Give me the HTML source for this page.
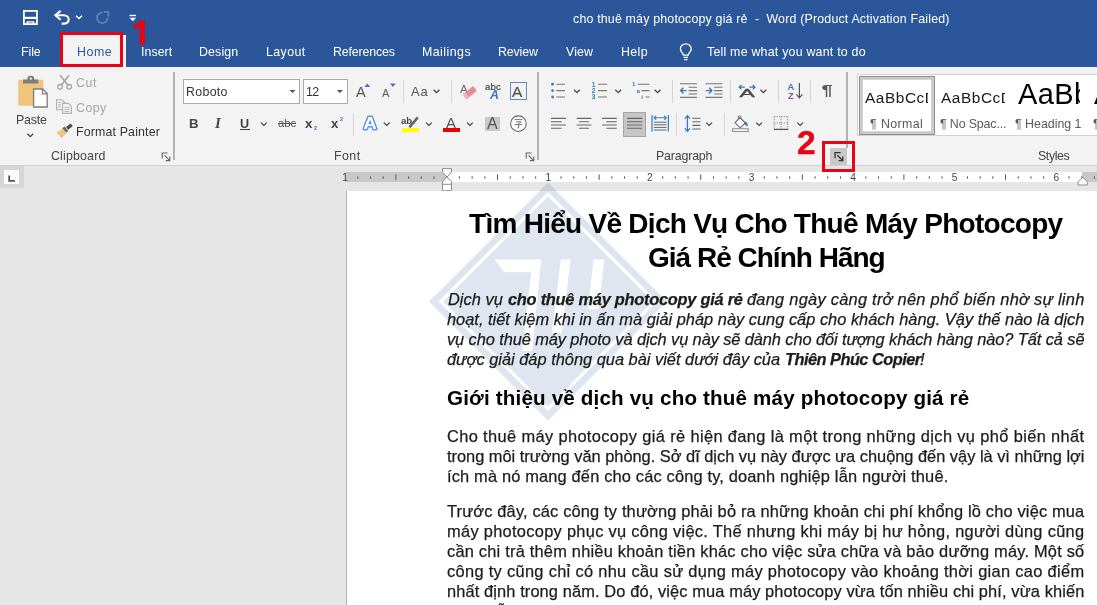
<!DOCTYPE html>
<html lang="vi">
<head>
<meta charset="utf-8">
<title>Word</title>
<style>
html,body{margin:0;padding:0;}
body{width:1097px;height:605px;overflow:hidden;position:relative;background:#e6e6e6;font-family:"Liberation Sans",sans-serif;color:#444;}
.t{position:absolute;white-space:pre;line-height:1;margin:0;padding:0;will-change:transform;}
.a{position:absolute;}
.sep{position:absolute;width:1px;background:#d4d4d4;}
.gsep{position:absolute;width:1px;background:#b4b4b4;}
svg{position:absolute;overflow:visible;}
</style>
</head>
<body>
<!-- ===== title bar + tabs ===== -->
<div class="a" style="left:0;top:0;width:1097px;height:67px;background:#2b579a;"></div>
<div class="a" style="left:63px;top:35px;width:63px;height:32px;background:#f3f3f3;"></div>
<!-- save -->
<svg style="left:22px;top:9px" width="18" height="18" viewBox="22 9 18 18">
<rect x="23.9" y="10.9" width="13" height="13.2" fill="none" stroke="#fff" stroke-width="1.8"/>
<rect x="24" y="16.8" width="13" height="2.2" fill="#fff"/>
<path d="M26.6 21.2 H34.4 V24.6 H32.6 V22.6 H28.4 V24.6 H26.6 Z" fill="#fff"/>
</svg>
<!-- undo -->
<svg style="left:52px;top:8px" width="20" height="20" viewBox="52 8 20 20">
<path d="M60.6 10.9 L55.4 15.3 L60.6 19.7" fill="none" stroke="#fff" stroke-width="2.1"/>
<path d="M56 15.3 H63.4 C70.4 15.3 70.6 23.4 63.2 23.6 H61.6" fill="none" stroke="#fff" stroke-width="2.1"/>
</svg>
<svg style="left:74px;top:13px" width="10" height="8" viewBox="74 13 10 8"><path d="M76 15.8 L79 18.6 L82 15.8" fill="none" stroke="#fff" stroke-width="1.4"/></svg>
<!-- redo (dim) -->
<svg style="left:94px;top:9px" width="18" height="18" viewBox="94 9 18 18">
<path d="M107.6 17.8 A5.3 5.3 0 1 1 102.3 12.5" fill="none" stroke="#5c82bd" stroke-width="1.8"/>
<path d="M103.6 11.8 H108.4 V16.6" fill="none" stroke="#5c82bd" stroke-width="1.8"/>
</svg>
<!-- customize -->
<svg style="left:128px;top:12px" width="10" height="12" viewBox="128 12 10 12">
<rect x="129.6" y="14.8" width="6.4" height="1.4" fill="#fff"/>
<path d="M129.4 17.8 H136.2 L132.8 21.2 Z" fill="#fff"/>
</svg>
<!-- lightbulb -->
<svg style="left:677px;top:42px" width="18" height="20" viewBox="677 42 18 20">
<path d="M683.4 55.2 C683.4 52.8 680.4 52.2 680.4 49 A5.4 5.2 0 0 1 691.2 49 C691.2 52.2 688.2 52.8 688.2 55.2 Z" fill="none" stroke="#fff" stroke-width="1.3"/>
<path d="M683.6 57.4 H688 M684.2 59.6 H687.4" stroke="#fff" stroke-width="1.2"/>
</svg>

<span class="t" style="left:572.9px;top:13.2px;font-size:12.4px;letter-spacing:0.180px;color:#fff;">cho thuê máy photocopy giá rẻ  -  Word (Product Activation Failed)</span>
<span class="t" style="left:21.1px;top:45.8px;font-size:12.4px;letter-spacing:-0.067px;color:#fff;">File</span>
<span class="t" style="left:77.2px;top:45.8px;font-size:12.4px;letter-spacing:0.534px;color:#2b579a;">Home</span>
<span class="t" style="left:140.5px;top:45.8px;font-size:12.4px;letter-spacing:0.050px;color:#fff;">Insert</span>
<span class="t" style="left:199.3px;top:45.8px;font-size:12.4px;letter-spacing:0.120px;color:#fff;">Design</span>
<span class="t" style="left:265.8px;top:45.8px;font-size:12.4px;letter-spacing:0.416px;color:#fff;">Layout</span>
<span class="t" style="left:332.6px;top:45.8px;font-size:12.4px;letter-spacing:-0.147px;color:#fff;">References</span>
<span class="t" style="left:421.7px;top:45.8px;font-size:12.4px;letter-spacing:0.456px;color:#fff;">Mailings</span>
<span class="t" style="left:497.9px;top:45.8px;font-size:12.4px;letter-spacing:-0.157px;color:#fff;">Review</span>
<span class="t" style="left:565.6px;top:45.8px;font-size:12.4px;letter-spacing:0.115px;color:#fff;">View</span>
<span class="t" style="left:620.8px;top:45.8px;font-size:12.4px;letter-spacing:0.379px;color:#fff;">Help</span>
<span class="t" style="left:707.2px;top:45.8px;font-size:12.4px;letter-spacing:0.218px;color:#fff;">Tell me what you want to do</span>

<!-- ===== ribbon ===== -->
<div class="a" style="left:0;top:67px;width:1097px;height:98px;background:#f3f3f3;border-bottom:1px solid #d2d2d2;"></div>
<!-- ===== Clipboard group ===== -->
<svg style="left:16px;top:74px" width="34" height="36" viewBox="16 74 34 36">
<rect x="18.2" y="79.8" width="25.2" height="26" rx="1.6" fill="#edc57c"/>
<path d="M23 83.400 V79.400 H27.400 V78.400 A3.400 2.600 0 0 1 34.200 78.400 V79.400 H38.300 V83.400 Z" fill="#7d7d7d"/>
<circle cx="30.800" cy="78.700" r="1.100" fill="#f3f3f3"/>
<path d="M33.600 89 H42.600 L47.200 93.600 V107 H33.600 Z" fill="#fff" stroke="#7d7d7d" stroke-width="1.3"/>
<path d="M42.400 89.200 V93.800 H47" fill="none" stroke="#7d7d7d" stroke-width="1.200"/>
</svg>
<span class="t" style="left:15.6px;top:113.7px;font-size:12.4px;letter-spacing:-0.177px;color:#444;">Paste</span>
<svg style="left:26px;top:132px" width="9" height="7" viewBox="26 132 9 7"><path d="M27.400 133.800 L30.300 136.600 L33.200 133.800" fill="none" stroke="#444" stroke-width="1.300"/></svg>
<!-- scissors -->
<svg style="left:56px;top:74px" width="18" height="17" viewBox="56 74 18 17">
<path d="M60.200 75.200 L68 85.200 M69 75.200 L61.200 85.200" fill="none" stroke="#a8a8a8" stroke-width="1.700"/>
<circle cx="60" cy="86.800" r="2.300" fill="none" stroke="#a6a6a6" stroke-width="1.300"/>
<circle cx="69.200" cy="86.800" r="2.300" fill="none" stroke="#a6a6a6" stroke-width="1.300"/>
</svg>
<span class="t" style="left:75.8px;top:77.2px;font-size:12.4px;letter-spacing:0.568px;color:#a6a6a6;">Cut</span>
<!-- copy -->
<svg style="left:55px;top:98px" width="18" height="17" viewBox="55 98 18 17">
<path d="M56.600 99.800 H62 L64.400 102.200 V109.800 H56.600 Z" fill="#f3f3f3" stroke="#b0b0b0" stroke-width="1.100"/>
<path d="M58 102.600 H61.400 M58 104.800 H61 M58 107 H61" stroke="#b0b0b0" stroke-width="0.900"/>
<path d="M62.600 103.400 H68.400 L71.400 106.400 V113.400 H62.600 Z" fill="#f3f3f3" stroke="#b0b0b0" stroke-width="1.100"/>
<path d="M64.400 107.400 H69.600 M64.400 109.400 H69.600 M64.400 111.400 H69.600" stroke="#b0b0b0" stroke-width="0.900"/>
</svg>
<span class="t" style="left:75.8px;top:101.9px;font-size:12.4px;letter-spacing:0.441px;color:#a6a6a6;">Copy</span>
<!-- format painter -->
<svg style="left:55px;top:122px" width="20" height="18" viewBox="55 122 20 18">
<path d="M56.600 132.600 L62.400 129 L66.400 133.600 L61.200 138 Z" fill="#edc57c"/>
<path d="M62.200 128.200 L64.600 126.400 L68.400 131 L66.200 132.800 Z" fill="#6a6a6a"/>
<path d="M66 127 L70.600 123.400 L72.800 126 L68.200 129.800 Z" fill="#4a4a4a"/>
</svg>
<span class="t" style="left:75.8px;top:125.7px;font-size:12.4px;letter-spacing:0.146px;color:#333;">Format Painter</span>
<span class="t" style="left:50.8px;top:150.2px;font-size:12.4px;letter-spacing:0.161px;color:#444;">Clipboard</span>
<svg style="left:161px;top:152px" width="10" height="10" viewBox="161 152 10 10">
<path d="M162.200 158.400 V153 H167.600" fill="none" stroke="#666" stroke-width="1.100"/>
<path d="M164.600 155.400 L169.600 160.400 M169.800 156.600 V160.600 H165.800" fill="none" stroke="#666" stroke-width="1.100"/>
</svg>
<div class="gsep" style="left:173px;top:72px;height:88px;width:1.500px;background:#b2b2b2;"></div>

<!-- ===== Font group ===== -->
<div class="a" style="left:183px;top:79px;width:115px;height:23px;background:#fff;border:1px solid #ababab;"></div>
<div class="a" style="left:303px;top:79px;width:43px;height:23px;background:#fff;border:1px solid #ababab;"></div>
<span class="t" style="left:186.0px;top:86.0px;font-size:12.4px;letter-spacing:0.305px;color:#333;">Roboto</span>
<span class="t" style="left:305.9px;top:86.0px;font-size:12.4px;letter-spacing:-0.598px;color:#333;">12</span>
<svg style="left:288px;top:88px" width="9" height="6" viewBox="288 88 9 6"><path d="M289.400 90 H295.600 L292.500 93 Z" fill="#555"/></svg>
<svg style="left:335px;top:88px" width="9" height="6" viewBox="335 88 9 6"><path d="M336.800 90 H343 L339.900 93 Z" fill="#555"/></svg>
<span class="t" style="left:188.9px;top:117.3px;font-size:13.2px;letter-spacing:0.269px;color:#444;font-weight:bold;">B</span>
<span class="t" style="left:215.0px;top:115.6px;font-size:14.8px;letter-spacing:3.234px;color:#444;font-weight:bold;font-style:italic;font-family:'Liberation Serif',serif;">I</span>
<span class="t" style="left:239.6px;top:117.6px;font-size:12.6px;letter-spacing:1.791px;color:#444;font-weight:bold;">U</span>
<div class="a" style="left:240px;top:128.800px;width:10px;height:1.200px;background:#444;"></div>
<svg style="left:259px;top:120px" width="10" height="8" viewBox="259 120 10 8"><path d="M261 122.600 L263.900 125.400 L266.800 122.600" fill="none" stroke="#444" stroke-width="1.300"/></svg>
<span class="t" style="left:277.8px;top:118.4px;font-size:11.4px;letter-spacing:-0.058px;color:#555;">abc</span>
<div class="a" style="left:278px;top:123.400px;width:18px;height:1.100px;background:#555;"></div>
<span class="t" style="left:305.0px;top:117.3px;font-size:13.2px;letter-spacing:1.056px;color:#444;font-weight:bold;">x</span>
<span class="t" style="left:314.1px;top:125.6px;font-size:5.6px;letter-spacing:1.975px;color:#3a78c2;font-weight:bold;">2</span>
<span class="t" style="left:330.5px;top:117.3px;font-size:13.2px;letter-spacing:1.056px;color:#444;font-weight:bold;">x</span>
<span class="t" style="left:339.6px;top:117.2px;font-size:5.6px;letter-spacing:1.675px;color:#3a78c2;font-weight:bold;">2</span>
<div class="sep" style="left:353px;top:113px;height:23px;"></div>
<span class="t" style="left:356.0px;top:85.0px;font-size:14.6px;letter-spacing:2.366px;color:#555;">A</span>
<svg style="left:363px;top:82px" width="8" height="6" viewBox="363 82 8 6"><path d="M364.400 87 L367.300 83.400 L370.200 87 Z" fill="#3a78c2"/></svg>
<span class="t" style="left:382.4px;top:88.1px;font-size:11.0px;letter-spacing:2.056px;color:#555;">A</span>
<svg style="left:389px;top:82px" width="8" height="6" viewBox="389 82 8 6"><path d="M390 83.400 H395.800 L392.900 87 Z" fill="#3a78c2"/></svg>
<div class="sep" style="left:403px;top:80px;height:23px;"></div>
<span class="t" style="left:410.8px;top:84.9px;font-size:13.0px;letter-spacing:0.797px;color:#555;">Aa</span>
<svg style="left:432px;top:87px" width="10" height="8" viewBox="432 87 10 8"><path d="M433.600 89.800 L436.500 92.600 L439.400 89.800" fill="none" stroke="#444" stroke-width="1.300"/></svg>
<div class="sep" style="left:451px;top:80px;height:23px;"></div>
<!-- clear formatting -->
<span class="t" style="left:460.4px;top:83.8px;font-size:11.5px;letter-spacing:1.128px;color:#666;">A</span>
<svg style="left:462px;top:84px" width="16" height="16" viewBox="462 84 16 16">
<g transform="rotate(-40 469.800 92.600)"><rect x="463" y="89.500" width="13.600" height="6.200" rx="1.200" fill="#e88b9c"/><rect x="463" y="89.500" width="3.400" height="6.200" rx="1" fill="#f2b3bf"/></g>
</svg>
<!-- text effects abc/A -->
<span class="t" style="left:484.6px;top:82.1px;font-size:9.6px;letter-spacing:0.177px;color:#444;-webkit-text-stroke:0.200px #444;">abc</span>
<span class="t" style="left:489.8px;top:89.4px;font-size:12.4px;letter-spacing:2.647px;color:#3a78c2;font-weight:bold;font-style:italic;">A</span>
<!-- char border -->
<div class="a" style="left:510px;top:82px;width:17px;height:17.600px;border:1px solid #5f8bc9;box-sizing:border-box;"></div>
<span class="t" style="left:512.4px;top:83.7px;font-size:15.4px;letter-spacing:2.334px;color:#505050;-webkit-text-stroke:0.200px #505050;">A</span>
<!-- row2: text effects -->
<svg style="left:360px;top:114px" width="20" height="18" viewBox="360 114 20 18">
<text x="363.400" y="129.200" font-family="Liberation Sans, sans-serif" font-size="17" font-weight="bold" fill="#fff" stroke="#5f97de" stroke-width="2.800" paint-order="stroke" stroke-linejoin="round" textLength="13.200" lengthAdjust="spacingAndGlyphs">A</text>
</svg>
<svg style="left:382px;top:120px" width="10" height="8" viewBox="382 120 10 8"><path d="M383.800 122.600 L386.700 125.400 L389.600 122.600" fill="none" stroke="#444" stroke-width="1.300"/></svg>
<!-- highlight -->
<span class="t" style="left:401.2px;top:116.0px;font-size:9.6px;letter-spacing:-0.102px;color:#444;font-weight:bold;">ab</span>
<svg style="left:400px;top:114px" width="22" height="20" viewBox="400 114 22 20">
<path d="M408.400 126.600 L416.800 116.600 L418.800 118.200 L410.600 128 Z" fill="#666"/>
<rect x="402" y="128" width="17" height="4.200" fill="#ffff00"/>
</svg>
<svg style="left:424px;top:120px" width="10" height="8" viewBox="424 120 10 8"><path d="M426 122.600 L428.900 125.400 L431.800 122.600" fill="none" stroke="#444" stroke-width="1.300"/></svg>
<!-- font color -->
<span class="t" style="left:445.8px;top:115.6px;font-size:14.8px;letter-spacing:2.725px;color:#555;">A</span>
<div class="a" style="left:443px;top:128px;width:17px;height:4.200px;background:#ee0000;"></div>
<svg style="left:465px;top:120px" width="10" height="8" viewBox="465 120 10 8"><path d="M467 122.600 L469.900 125.400 L472.800 122.600" fill="none" stroke="#444" stroke-width="1.300"/></svg>
<!-- char shading -->
<div class="a" style="left:485.300px;top:116.600px;width:15px;height:14.400px;background:#c8c8c8;"></div>
<span class="t" style="left:486.6px;top:115.7px;font-size:16.0px;letter-spacing:2.528px;color:#555;">A</span>
<!-- enclosed -->
<svg style="left:508px;top:114px" width="20" height="20" viewBox="508 114 20 20">
<circle cx="518.400" cy="123.700" r="7.800" fill="#fff" stroke="#666" stroke-width="1.100"/>
<path d="M515 120.200 V119.400 H522 V120.200 M516 121.800 H521 L518.600 123.600 M514.600 124.600 H522.400 M518.600 123.600 V128 H517.400" fill="none" stroke="#666" stroke-width="0.900"/>
</svg>
<svg style="left:525px;top:152px" width="10" height="10" viewBox="525 152 10 10">
<path d="M526.200 158.400 V153 H531.600" fill="none" stroke="#666" stroke-width="1.100"/>
<path d="M528.600 155.400 L533.600 160.400 M533.800 156.600 V160.600 H529.800" fill="none" stroke="#666" stroke-width="1.100"/>
</svg>
<div class="gsep" style="left:537px;top:72px;height:88px;width:1.500px;background:#b2b2b2;"></div>
<span class="t" style="left:333.8px;top:150.2px;font-size:12.4px;letter-spacing:0.451px;color:#444;">Font</span>

<!-- ===== Paragraph group ===== -->
<!-- bullets -->
<svg style="left:550px;top:81px" width="17" height="19" viewBox="550 81 17 19">
<circle cx="552.600" cy="84.200" r="1.400" fill="#3a78c2"/><circle cx="552.600" cy="90.600" r="1.400" fill="#3a78c2"/><circle cx="552.600" cy="97" r="1.400" fill="#3a78c2"/>
<path d="M556.400 84.200 H565 M556.400 90.600 H565 M556.400 97 H565" stroke="#777" stroke-width="1.100"/>
</svg>
<svg style="left:572px;top:87px" width="10" height="8" viewBox="572 87 10 8"><path d="M574 89.800 L576.900 92.600 L579.800 89.800" fill="none" stroke="#444" stroke-width="1.300"/></svg>
<!-- numbering -->
<svg style="left:591px;top:81px" width="18" height="19" viewBox="591 81 18 19">
<path d="M598 84.200 H607 M598 90.600 H607 M598 97 H607" stroke="#777" stroke-width="1.100"/>
<text x="591.800" y="86.600" font-family="Liberation Sans, sans-serif" font-size="6.500" font-weight="bold" fill="#3a78c2">1</text>
<text x="591.800" y="93" font-family="Liberation Sans, sans-serif" font-size="6.500" font-weight="bold" fill="#3a78c2">2</text>
<text x="591.800" y="99.400" font-family="Liberation Sans, sans-serif" font-size="6.500" font-weight="bold" fill="#3a78c2">3</text>
</svg>
<svg style="left:613px;top:87px" width="10" height="8" viewBox="613 87 10 8"><path d="M615.300 89.800 L618.200 92.600 L621.100 89.800" fill="none" stroke="#444" stroke-width="1.300"/></svg>
<!-- multilevel -->
<svg style="left:631px;top:81px" width="20" height="19" viewBox="631 81 20 19">
<path d="M637.600 84.200 H649.600 M641.600 90.600 H649.600 M645.600 97 H649.600" stroke="#777" stroke-width="1.100"/>
<text x="632" y="86.400" font-family="Liberation Sans, sans-serif" font-size="6.200" font-weight="bold" fill="#3a78c2">1</text>
<text x="636.400" y="92.800" font-family="Liberation Sans, sans-serif" font-size="6.200" font-weight="bold" fill="#3a78c2">a</text>
<text x="641.200" y="99.400" font-family="Liberation Sans, sans-serif" font-size="6.200" font-weight="bold" fill="#3a78c2">i</text>
</svg>
<svg style="left:653px;top:87px" width="10" height="8" viewBox="653 87 10 8"><path d="M654.700 89.800 L657.600 92.600 L660.500 89.800" fill="none" stroke="#444" stroke-width="1.300"/></svg>
<div class="sep" style="left:672px;top:80px;height:23px;"></div>
<!-- decrease indent -->
<svg style="left:679px;top:81px" width="19" height="19" viewBox="679 81 19 19">
<path d="M680 83.800 H697 M688.600 87.200 H697 M688.600 90.600 H697 M688.600 94 H697 M680 97.400 H697" stroke="#777" stroke-width="1.100"/>
<path d="M680.400 90.600 H686.600 M683.400 87.800 L680.600 90.600 L683.400 93.400" fill="none" stroke="#3a78c2" stroke-width="1.400"/>
</svg>
<!-- increase indent -->
<svg style="left:704px;top:81px" width="19" height="19" viewBox="704 81 19 19">
<path d="M705.500 83.800 H722.500 M714.100 87.200 H722.500 M714.100 90.600 H722.500 M714.100 94 H722.500 M705.500 97.400 H722.500" stroke="#777" stroke-width="1.100"/>
<path d="M705.700 90.600 H711.900 M709.100 87.800 L711.900 90.600 L709.100 93.400" fill="none" stroke="#3a78c2" stroke-width="1.400"/>
</svg>
<div class="sep" style="left:730px;top:80px;height:23px;"></div>
<!-- asian layout -->
<svg style="left:737px;top:82px" width="19" height="17" viewBox="737 82 19 17">
<text x="739.400" y="97.300" font-family="Liberation Sans, sans-serif" font-size="10.800" fill="#4a4a4a" stroke="#4a4a4a" stroke-width="0.350" textLength="15.200" lengthAdjust="spacingAndGlyphs">A</text>
<path d="M739.200 87.200 H744.800 M741.400 85 L739.200 87.200 L741.400 89.400 M749.400 87.200 H755 M752.800 85 L755 87.200 L752.800 89.400" fill="none" stroke="#3a78c2" stroke-width="1.300"/>
</svg>
<svg style="left:759px;top:87px" width="10" height="8" viewBox="759 87 10 8"><path d="M760.400 89.800 L763.300 92.600 L766.200 89.800" fill="none" stroke="#444" stroke-width="1.300"/></svg>
<div class="sep" style="left:778px;top:80px;height:23px;"></div>
<!-- sort -->
<svg style="left:786px;top:81px" width="18" height="19" viewBox="786 81 18 19">
<text x="787.600" y="89.800" font-family="Liberation Sans, sans-serif" font-size="9.400" font-weight="bold" fill="#3a78c2">A</text>
<text x="788" y="98.600" font-family="Liberation Sans, sans-serif" font-size="9.400" font-weight="bold" fill="#8a4fb0">Z</text>
<path d="M799.400 83 V97.600 M796.400 94.400 L799.400 97.800 L802.400 94.400" fill="none" stroke="#555" stroke-width="1.200"/>
</svg>
<div class="sep" style="left:810px;top:80px;height:23px;"></div>
<svg style="left:820px;top:82px" width="14" height="18" viewBox="820 82 14 18"><text x="821.400" y="95" font-family="Liberation Sans, sans-serif" font-size="15.200" font-weight="bold" fill="#5a5a5a" textLength="11.200" lengthAdjust="spacingAndGlyphs">¶</text></svg>
<!-- row 2 -->
<svg style="left:550px;top:116px" width="17" height="14" viewBox="550 116 17 14">
<path d="M551 118.400 H566 M551 121.700 H561.600 M551 125 H566 M551 128.300 H561.600" stroke="#666" stroke-width="1.100"/>
</svg>
<svg style="left:576px;top:116px" width="17" height="14" viewBox="576 116 17 14">
<path d="M576.600 118.400 H591.400 M579 121.700 H589 M576.600 125 H591.400 M579 128.300 H589" stroke="#666" stroke-width="1.100"/>
</svg>
<svg style="left:601px;top:116px" width="17" height="14" viewBox="601 116 17 14">
<path d="M602 118.400 H616.800 M606.400 121.700 H616.800 M602 125 H616.800 M606.400 128.300 H616.800" stroke="#666" stroke-width="1.100"/>
</svg>
<div class="a" style="left:623px;top:112px;width:22px;height:23.500px;background:#c6c6c6;border:1px solid #a4a4a4;box-sizing:border-box;width:23.400px;height:24.600px;"></div>
<svg style="left:626px;top:116px" width="17" height="14" viewBox="626 116 17 14">
<path d="M627 118.400 H642.200 M627 121.700 H642.200 M627 125 H642.200 M627 128.300 H642.200" stroke="#666" stroke-width="1.100"/>
</svg>
<!-- distributed -->
<svg style="left:650px;top:114px" width="20" height="19" viewBox="650 114 20 19">
<path d="M652 115 V131.600 M668.400 115 V131.600" stroke="#3a78c2" stroke-width="1.200"/>
<path d="M654 117.800 H666.400 M656.200 115.800 L654 117.800 L656.200 119.800 M664.200 115.800 L666.400 117.800 L664.200 119.800" fill="none" stroke="#3a78c2" stroke-width="1.100"/>
<path d="M653.800 122.200 H666.600 M653.800 124.800 H666.600 M653.800 127.400 H666.600 M653.800 130 H666.600" stroke="#666" stroke-width="1"/>
</svg>
<div class="sep" style="left:676px;top:113px;height:23px;"></div>
<!-- line spacing -->
<svg style="left:683px;top:114px" width="19" height="19" viewBox="683 114 19 19">
<path d="M687.400 116 V131 M684.800 118.600 L687.400 115.800 L690 118.600 M684.800 128.400 L687.400 131.200 L690 128.400" fill="none" stroke="#3a78c2" stroke-width="1.300"/>
<path d="M692.400 118.200 H700.400 M692.400 121.800 H700.400 M692.400 125.400 H700.400 M692.400 129 H700.400" stroke="#666" stroke-width="1.100"/>
</svg>
<svg style="left:704px;top:120px" width="10" height="8" viewBox="704 120 10 8"><path d="M706.200 122.600 L709.100 125.400 L712 122.600" fill="none" stroke="#444" stroke-width="1.300"/></svg>
<div class="sep" style="left:723.500px;top:113px;height:23px;"></div>
<!-- shading -->
<svg style="left:731px;top:114px" width="19" height="19" viewBox="731 114 19 19">
<path d="M735 122.600 L740 117.600 L745.400 123 L740.200 127.800 Z" fill="#fff" stroke="#666" stroke-width="1.100"/>
<path d="M738.400 119.200 V116.400 Q739.600 115.200 740.800 116.400 V118.600" fill="none" stroke="#666" stroke-width="1"/>
<path d="M745.200 121.400 Q748.600 122.600 747.600 126.800 Q746 124.600 744.400 124.400 Z" fill="#3a78c2"/>
<rect x="732.600" y="128.800" width="15.600" height="2.600" fill="#fff" stroke="#777" stroke-width="0.900"/>
</svg>
<svg style="left:754px;top:120px" width="10" height="8" viewBox="754 120 10 8"><path d="M756.200 122.600 L759.100 125.400 L762 122.600" fill="none" stroke="#444" stroke-width="1.300"/></svg>
<!-- borders -->
<svg style="left:772px;top:115px" width="18" height="16" viewBox="772 115 18 16">
<path d="M774.200 116.600 H788 M774.200 123 H788 M774.200 116.600 V129.400 M781 116.600 V129.400 M787.800 116.600 V129.400" fill="none" stroke="#8a8a8a" stroke-width="1" stroke-dasharray="1.200 1.200"/>
<path d="M774 129.400 H788.200" stroke="#555" stroke-width="1.300"/>
</svg>
<svg style="left:795px;top:120px" width="10" height="8" viewBox="795 120 10 8"><path d="M797.200 122.600 L800.100 125.400 L803 122.600" fill="none" stroke="#444" stroke-width="1.300"/></svg>
<span class="t" style="left:656.0px;top:150.0px;font-size:12.4px;letter-spacing:-0.175px;color:#444;">Paragraph</span>
<!-- dialog launcher (highlighted) -->
<div class="a" style="left:830px;top:148px;width:17.300px;height:17px;background:#c8c8c8;"></div>
<svg style="left:834px;top:151px" width="11" height="11" viewBox="834 151 11 11">
<path d="M835 158.200 V152.600 H840.600" fill="none" stroke="#333" stroke-width="1.300"/>
<path d="M837.400 155.200 L842.600 160.400 M842.800 156.400 V160.600 H838.600" fill="none" stroke="#333" stroke-width="1.300"/>
</svg>
<div class="gsep" style="left:846px;top:72px;height:76px;width:1.500px;background:#b2b2b2;"></div>

<!-- ===== Styles gallery ===== -->
<div class="a" style="left:857px;top:74px;width:245px;height:62px;background:#fff;border:1px solid #d2d2d2;box-sizing:border-box;"></div>
<div class="a" style="left:859px;top:76px;width:76px;height:58.600px;border:1px solid #8e8e8e;box-shadow:inset 0 0 0 2.800px #cacaca;box-sizing:border-box;background:#fff;"></div>
<div class="a" style="left:860px;top:80px;width:68.400px;height:30px;overflow:hidden;"><span class="t" style="left:5.2px;top:9.9px;font-size:15.4px;letter-spacing:0.557px;color:#1a1a1a;">AaBbCcDd</span></div>
<span class="t" style="left:870.1px;top:117.5px;font-size:12.4px;letter-spacing:0.396px;color:#5a5a5a;">¶ Normal</span>
<div class="a" style="left:936px;top:80px;width:68.600px;height:30px;overflow:hidden;"><span class="t" style="left:5.4px;top:9.9px;font-size:15.4px;letter-spacing:0.557px;color:#1a1a1a;">AaBbCcDd</span></div>
<span class="t" style="left:940.0px;top:117.5px;font-size:12.4px;letter-spacing:-0.138px;color:#5a5a5a;">¶ No Spac...</span>
<div class="a" style="left:1012px;top:76px;width:68.200px;height:36px;overflow:hidden;"><span class="t" style="left:6.0px;top:4.2px;font-size:29.0px;letter-spacing:0.362px;color:#000;">AaBb</span></div>
<span class="t" style="left:1015.1px;top:117.5px;font-size:12.4px;letter-spacing:-0.009px;color:#5a5a5a;">¶ Heading 1</span>
<div class="a" style="left:1090px;top:76px;width:10px;height:36px;overflow:hidden;"><span class="t" style="left:3.8px;top:4.2px;font-size:29.0px;letter-spacing:1.656px;color:#000;">A</span></div>
<span class="t" style="left:1092.8px;top:117.5px;font-size:12.4px;letter-spacing:1.344px;color:#5a5a5a;">¶</span>
<span class="t" style="left:1037.5px;top:150.0px;font-size:12.4px;letter-spacing:-0.408px;color:#444;">Styles</span>


<!-- ===== ruler + page ===== -->
<div class="a" style="left:0;top:166px;width:24.200px;height:22.300px;background:#d6d6d6;"></div>
<div class="a" style="left:3.700px;top:169.800px;width:15.700px;height:14.200px;background:#fcfcfc;"></div>
<svg style="left:7px;top:174px" width="10" height="9" viewBox="7 174 10 9"><path d="M9.200 175.600 V180.900 H14.900" fill="none" stroke="#555" stroke-width="1.800"/></svg>
<div class="a" style="left:345px;top:171.500px;width:102px;height:10.500px;background:#c8c8c8;"></div>
<div class="a" style="left:447px;top:171.500px;width:635px;height:10.500px;background:#fff;"></div>
<div class="a" style="left:1082px;top:171.500px;width:20px;height:10.500px;background:#c8c8c8;"></div>
<svg style="left:340px;top:166px" width="757" height="28" viewBox="340 166 757 28">
<rect x="357.3" y="176.400" width="1.100" height="2.200" fill="#555"/>
<rect x="370.0" y="176.400" width="1.100" height="2.200" fill="#555"/>
<rect x="382.7" y="176.400" width="1.100" height="2.200" fill="#555"/>
<rect x="395.4" y="174.400" width="1" height="5.400" fill="#555"/>
<rect x="408.1" y="176.400" width="1.100" height="2.200" fill="#555"/>
<rect x="420.8" y="176.400" width="1.100" height="2.200" fill="#555"/>
<rect x="433.5" y="176.400" width="1.100" height="2.200" fill="#555"/>
<rect x="458.9" y="176.400" width="1.100" height="2.200" fill="#555"/>
<rect x="471.6" y="176.400" width="1.100" height="2.200" fill="#555"/>
<rect x="484.3" y="176.400" width="1.100" height="2.200" fill="#555"/>
<rect x="497.0" y="174.400" width="1" height="5.400" fill="#555"/>
<rect x="509.7" y="176.400" width="1.100" height="2.200" fill="#555"/>
<rect x="522.4" y="176.400" width="1.100" height="2.200" fill="#555"/>
<rect x="535.1" y="176.400" width="1.100" height="2.200" fill="#555"/>
<rect x="560.5" y="176.400" width="1.100" height="2.200" fill="#555"/>
<rect x="573.2" y="176.400" width="1.100" height="2.200" fill="#555"/>
<rect x="585.9" y="176.400" width="1.100" height="2.200" fill="#555"/>
<rect x="598.6" y="174.400" width="1" height="5.400" fill="#555"/>
<rect x="611.3" y="176.400" width="1.100" height="2.200" fill="#555"/>
<rect x="624.0" y="176.400" width="1.100" height="2.200" fill="#555"/>
<rect x="636.7" y="176.400" width="1.100" height="2.200" fill="#555"/>
<rect x="662.1" y="176.400" width="1.100" height="2.200" fill="#555"/>
<rect x="674.8" y="176.400" width="1.100" height="2.200" fill="#555"/>
<rect x="687.5" y="176.400" width="1.100" height="2.200" fill="#555"/>
<rect x="700.2" y="174.400" width="1" height="5.400" fill="#555"/>
<rect x="712.9" y="176.400" width="1.100" height="2.200" fill="#555"/>
<rect x="725.6" y="176.400" width="1.100" height="2.200" fill="#555"/>
<rect x="738.3" y="176.400" width="1.100" height="2.200" fill="#555"/>
<rect x="763.7" y="176.400" width="1.100" height="2.200" fill="#555"/>
<rect x="776.4" y="176.400" width="1.100" height="2.200" fill="#555"/>
<rect x="789.1" y="176.400" width="1.100" height="2.200" fill="#555"/>
<rect x="801.8" y="174.400" width="1" height="5.400" fill="#555"/>
<rect x="814.5" y="176.400" width="1.100" height="2.200" fill="#555"/>
<rect x="827.2" y="176.400" width="1.100" height="2.200" fill="#555"/>
<rect x="839.9" y="176.400" width="1.100" height="2.200" fill="#555"/>
<rect x="865.3" y="176.400" width="1.100" height="2.200" fill="#555"/>
<rect x="878.0" y="176.400" width="1.100" height="2.200" fill="#555"/>
<rect x="890.7" y="176.400" width="1.100" height="2.200" fill="#555"/>
<rect x="903.4" y="174.400" width="1" height="5.400" fill="#555"/>
<rect x="916.1" y="176.400" width="1.100" height="2.200" fill="#555"/>
<rect x="928.8" y="176.400" width="1.100" height="2.200" fill="#555"/>
<rect x="941.5" y="176.400" width="1.100" height="2.200" fill="#555"/>
<rect x="966.9" y="176.400" width="1.100" height="2.200" fill="#555"/>
<rect x="979.6" y="176.400" width="1.100" height="2.200" fill="#555"/>
<rect x="992.3" y="176.400" width="1.100" height="2.200" fill="#555"/>
<rect x="1005.0" y="174.400" width="1" height="5.400" fill="#555"/>
<rect x="1017.7" y="176.400" width="1.100" height="2.200" fill="#555"/>
<rect x="1030.4" y="176.400" width="1.100" height="2.200" fill="#555"/>
<rect x="1043.1" y="176.400" width="1.100" height="2.200" fill="#555"/>
<rect x="1068.5" y="176.400" width="1.100" height="2.200" fill="#555"/>
<rect x="1081.2" y="176.400" width="1.100" height="2.200" fill="#555"/>
<rect x="1093.9" y="176.400" width="1.100" height="2.200" fill="#555"/>
<text x="345.1" y="181" text-anchor="middle" font-family="Liberation Sans, sans-serif" font-size="10.200" fill="#444">1</text>
<text x="548.3" y="181" text-anchor="middle" font-family="Liberation Sans, sans-serif" font-size="10.200" fill="#444">1</text>
<text x="649.9" y="181" text-anchor="middle" font-family="Liberation Sans, sans-serif" font-size="10.200" fill="#444">2</text>
<text x="751.5" y="181" text-anchor="middle" font-family="Liberation Sans, sans-serif" font-size="10.200" fill="#444">3</text>
<text x="853.1" y="181" text-anchor="middle" font-family="Liberation Sans, sans-serif" font-size="10.200" fill="#444">4</text>
<text x="954.7" y="181" text-anchor="middle" font-family="Liberation Sans, sans-serif" font-size="10.200" fill="#444">5</text>
<text x="1056.3" y="181" text-anchor="middle" font-family="Liberation Sans, sans-serif" font-size="10.200" fill="#444">6</text>
<path d="M442.500 168.600 H451.500 V172 L447 177.100 L442.500 172 Z" fill="#fff" stroke="#8c8c8c" stroke-width="1"/>
<path d="M447 177.100 L451.500 181.800 V190.800 H442.500 V181.800 Z" fill="#fff" stroke="#8c8c8c" stroke-width="1"/>
<path d="M442.500 184.300 H451.500" stroke="#8c8c8c" stroke-width="1"/>
<path d="M1082.700 177.200 L1087.300 181.800 V185 H1078.100 V181.800 Z" fill="#fff" stroke="#8c8c8c" stroke-width="1"/>
</svg>
<div class="a" style="left:346px;top:191px;width:760px;height:420px;background:#fff;border-left:1px solid #b2b2b2;"></div>
<svg style="left:420px;top:175px" width="260" height="255" viewBox="420 175 260 255">
<path d="M548.0 182.5 L667.0 301.5 L548.0 420.5 L429.0 301.5 Z M438.5 301.5 L548.0 411.0 L657.5 301.5 L548.0 192.0 Z" fill="rgba(43,87,154,0.155)" fill-rule="evenodd"/>
<path d="M548.0 196.5 L653.0 301.5 L548.0 406.5 L443.0 301.5 Z M494.6 259.6 L504.1 272.3 L531.2 272.3 L522.2 351 L532.2 351 L541.2 259.6 Z M560.9 259.6 L551.8 333 L561.8 333 L570.5 259.6 Z M593.5 259.6 L588 309 L598.8 309 L604.3 259.6 Z" fill="rgba(43,87,154,0.15)" fill-rule="evenodd"/>
</svg>

<span class="t" style="left:469.4px;top:210.2px;font-size:28.0px;letter-spacing:-0.725px;color:#000;font-weight:bold;">Tìm Hiểu Về Dịch Vụ Cho Thuê Máy Photocopy</span>
<span class="t" style="left:647.6px;top:244.0px;font-size:28.0px;letter-spacing:-0.993px;color:#000;font-weight:bold;">Giá Rẻ Chính Hãng</span>
<span class="t" style="left:447.6px;top:291.2px;font-size:16.4px;letter-spacing:0.035px;color:#1c1c1c;-webkit-text-stroke:0.250px #1c1c1c;font-style:italic;">Dịch vụ</span>
<span class="t" style="left:507.8px;top:291.2px;font-size:16.4px;letter-spacing:-0.261px;color:#1c1c1c;-webkit-text-stroke:0.250px #1c1c1c;font-style:italic;font-weight:bold;">cho thuê máy photocopy giá rẻ</span>
<span class="t" style="left:747.3px;top:291.2px;font-size:16.4px;letter-spacing:0.259px;color:#1c1c1c;-webkit-text-stroke:0.250px #1c1c1c;font-style:italic;">đang ngày càng trở nên phổ biến nhờ sự linh</span>
<span class="t" style="left:447.4px;top:311.2px;font-size:16.4px;letter-spacing:0.005px;color:#1c1c1c;-webkit-text-stroke:0.250px #1c1c1c;font-style:italic;">hoạt, tiết kiệm khi in ấn mà giải pháp này cung cấp cho khách hàng. Vậy thế nào là dịch</span>
<span class="t" style="left:447.4px;top:331.2px;font-size:16.4px;letter-spacing:-0.095px;color:#1c1c1c;-webkit-text-stroke:0.250px #1c1c1c;font-style:italic;">vụ cho thuê máy photo và dịch vụ này sẽ dành cho đối tượng khách hàng nào? Tất cả sẽ</span>
<span class="t" style="left:447.4px;top:351.0px;font-size:16.4px;letter-spacing:-0.000px;color:#1c1c1c;-webkit-text-stroke:0.250px #1c1c1c;font-style:italic;">được giải đáp thông qua bài viết dưới đây của</span>
<span class="t" style="left:784.8px;top:351.0px;font-size:16.4px;letter-spacing:-0.541px;color:#1c1c1c;-webkit-text-stroke:0.250px #1c1c1c;font-style:italic;font-weight:bold;">Thiên Phúc Copier</span>
<span class="t" style="left:920.2px;top:351.0px;font-size:16.4px;letter-spacing:0.237px;color:#1c1c1c;-webkit-text-stroke:0.250px #1c1c1c;font-style:italic;">!</span>
<span class="t" style="left:447.4px;top:388.2px;font-size:20.6px;letter-spacing:0.174px;color:#000;font-weight:bold;">Giới thiệu về dịch vụ cho thuê máy photocopy giá rẻ</span>
<span class="t" style="left:447.4px;top:427.7px;font-size:16.4px;letter-spacing:0.370px;color:#1c1c1c;-webkit-text-stroke:0.250px #1c1c1c;">Cho thuê máy photocopy giá rẻ hiện đang là một trong những dịch vụ phổ biến nhất</span>
<span class="t" style="left:447.4px;top:447.8px;font-size:16.4px;letter-spacing:-0.009px;color:#1c1c1c;-webkit-text-stroke:0.250px #1c1c1c;">trong môi trường văn phòng. Sở dĩ dịch vụ này được ưa chuộng đến vậy là vì những lợi</span>
<span class="t" style="left:447.4px;top:467.5px;font-size:16.4px;letter-spacing:0.167px;color:#1c1c1c;-webkit-text-stroke:0.250px #1c1c1c;">ích mà nó mang đến cho các công ty, doanh nghiệp lẫn người thuê.</span>
<span class="t" style="left:447.4px;top:502.7px;font-size:16.4px;letter-spacing:0.165px;color:#1c1c1c;-webkit-text-stroke:0.250px #1c1c1c;">Trước đây, các công ty thường phải bỏ ra những khoản chi phí khổng lồ cho việc mua</span>
<span class="t" style="left:447.4px;top:522.8px;font-size:16.4px;letter-spacing:0.303px;color:#1c1c1c;-webkit-text-stroke:0.250px #1c1c1c;">máy photocopy phục vụ công việc. Thế nhưng khi máy bị hư hỏng, người dùng cũng</span>
<span class="t" style="left:447.4px;top:542.8px;font-size:16.4px;letter-spacing:0.214px;color:#1c1c1c;-webkit-text-stroke:0.250px #1c1c1c;">cần chi trả thêm nhiều khoản tiền khác cho việc sửa chữa và bảo dưỡng máy. Một số</span>
<span class="t" style="left:447.4px;top:562.7px;font-size:16.4px;letter-spacing:0.319px;color:#1c1c1c;-webkit-text-stroke:0.250px #1c1c1c;">công ty cũng chỉ có nhu cầu sử dụng máy photocopy vào khoảng thời gian cao điểm</span>
<span class="t" style="left:447.4px;top:582.8px;font-size:16.4px;letter-spacing:0.115px;color:#1c1c1c;-webkit-text-stroke:0.250px #1c1c1c;">nhất định trong năm. Do đó, việc mua máy photocopy vừa tốn nhiều chi phí, vừa khiến</span>
<span class="t" style="left:497.400px;top:604px;font-size:16.400px;color:#1c1c1c;-webkit-text-stroke:0.250px #1c1c1c;">ẫ</span><span class="t" style="left:684px;top:604px;font-size:16.400px;color:#1c1c1c;-webkit-text-stroke:0.250px #1c1c1c;">ề</span><span class="t" style="left:724.600px;top:604px;font-size:16.400px;color:#1c1c1c;-webkit-text-stroke:0.250px #1c1c1c;">ế</span>


<div class="a" style="left:60px;top:32px;width:63.400px;height:34.800px;border:3px solid #e60416;box-sizing:border-box;"></div>
<svg style="left:130px;top:18px" width="18" height="29" viewBox="130 18 18 29"><path d="M140.400 20.600 H144.900 V44.500 H139.500 V26.200 L134.800 29.600 L132.800 26.200 Z" fill="#e60416"/></svg>
<div class="a" style="left:822px;top:141px;width:33px;height:31.400px;border:3px solid #e60416;box-sizing:border-box;"></div>
<span class="t" style="left:797.2px;top:125.5px;font-size:33.6px;letter-spacing:-0.588px;color:#e60416;font-weight:bold;-webkit-text-stroke:0.400px #e60416;">2</span>

</body>
</html>
